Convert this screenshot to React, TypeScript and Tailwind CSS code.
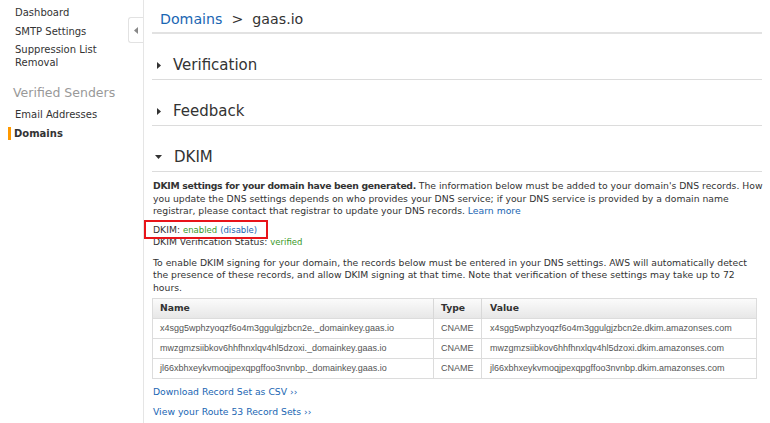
import React from 'react';

const records = [
  {
    name: 'x4sgg5wphzyoqzf6o4m3ggulgjzbcn2e._domainkey.gaas.io',
    type: 'CNAME',
    value: 'x4sgg5wphzyoqzf6o4m3ggulgjzbcn2e.dkim.amazonses.com',
  },
  {
    name: 'mwzgmzsiibkov6hhfhnxlqv4hl5dzoxi._domainkey.gaas.io',
    type: 'CNAME',
    value: 'mwzgmzsiibkov6hhfhnxlqv4hl5dzoxi.dkim.amazonses.com',
  },
  {
    name: 'jl66xbhxeykvmoqjpexqpgffoo3nvnbp._domainkey.gaas.io',
    type: 'CNAME',
    value: 'jl66xbhxeykvmoqjpexqpgffoo3nvnbp.dkim.amazonses.com',
  },
];

const verdana = { fontFamily: '"DejaVu Sans", Verdana, sans-serif' };
const arial = { fontFamily: '"Liberation Sans", Arial, sans-serif' };

function Caret({ open }: { open?: boolean }) {
  if (open) {
    return (
      <svg width="7" height="4" viewBox="0 0 7 4" className="ml-[3px] mr-[12px]">
        <path d="M0 0 L7 0 L3.5 4 Z" fill="#333" />
      </svg>
    );
  }
  return (
    <svg width="4" height="7" viewBox="0 0 4 7" className="ml-[5px] mr-[12px]">
      <path d="M0 0 L4 3.5 L0 7 Z" fill="#333" />
    </svg>
  );
}

function Section({ title, open }: { title: string; open?: boolean }) {
  return (
    <div className="flex items-center h-[46px] pt-[17px] border-b border-[#dcdcdc] text-[15px] text-[#333]">
      <Caret open={open} />
      <span>{title}</span>
    </div>
  );
}

export default function App() {
  return (
    <div className="flex w-[770px] h-[423px] bg-white overflow-hidden text-[#333]" style={verdana}>
      {/* sidebar */}
      <div className="w-[128px] shrink-0 pt-[3px] text-[10px]">
        <div className="pl-[15px] leading-[19px]">Dashboard</div>
        <div className="pl-[15px] leading-[19px]">SMTP Settings</div>
        <div className="pl-[15px] pt-[3px] leading-[12.5px]">
          Suppression List
          <br />
          Removal
        </div>
        <div className="pl-[13px] mt-[15px] text-[12.5px] text-[#999] leading-[18px]">Verified Senders</div>
        <div className="pl-[15px] mt-[3px] leading-[19px]">Email Addresses</div>
        <div className="flex items-center h-[19px]">
          <div className="ml-[8px] w-[3px] h-[13px] bg-[#f90]" />
          <span className="ml-[3px] font-bold">Domains</span>
        </div>
      </div>

      {/* collapse tab */}
      <div className="w-[15px] shrink-0 pt-[17px]">
        <div className="h-[26px] border border-r-0 border-[#e2e2e2] rounded-l-[3px] flex items-center justify-center">
          <svg width="4" height="7" viewBox="0 0 4 7">
            <path d="M4 0 L0 3.5 L4 7 Z" fill="#888" />
          </svg>
        </div>
      </div>

      {/* main */}
      <div className="flex-1 border-l border-[#e5e5e5] pl-[8px] pr-[8px]">
        <div className="h-[34px] pt-[9px] pl-[8px] border-b-2 border-[#e2e2e2] text-[14.2px] leading-[20px]">
          <span className="text-[#1a66b3]">Domains</span>
          <span className="mx-[9px] text-[#333]">&gt;</span>
          <span className="text-[#333]">gaas.io</span>
        </div>

        <Section title="Verification" />
        <Section title="Feedback" />
        <Section title="DKIM" open />

        <div className="text-[9.25px] leading-[12.5px] pl-[1px]">
          <p className="mt-[8px] mr-[-7px]">
            <b className="tracking-[-0.3px]">DKIM settings for your domain have been generated.</b> The information
            below must be added to your domain's DNS records. How you update the DNS settings depends on who provides
            your DNS service; if your DNS service is provided by a domain name registrar, please contact that
            registrar to update your DNS records. <span className="text-[#1a66b3]">Learn more</span>
          </p>

          <div className="relative mt-[6px] leading-[12px]">
            <div>
              DKIM: <span className="text-[8.5px] text-[#3a9a2a]">enabled</span>{' '}
              <span className="text-[8.5px] text-[#1a66b3]">(disable)</span>
            </div>
            <div className="absolute left-[-9px] top-[-4px] w-[124px] h-[19px] border-2 border-[#e8141a] pointer-events-none" />
          </div>
          <div className="leading-[11px]">
            DKIM Verification Status: <span className="text-[8.5px] text-[#3a9a2a]">verified</span>
          </div>

          <p className="mt-[9px]">
            To enable DKIM signing for your domain, the records below must be entered in your DNS settings. AWS will
            automatically detect the presence of these records, and allow DKIM signing at that time. Note that
            verification of these settings may take up to 72 hours.
          </p>
        </div>

        <table className="mt-[4px] w-[605px] table-fixed border-collapse border border-[#dcdcdc] text-[9.25px]">
          <colgroup>
            <col className="w-[281px]" />
            <col className="w-[48px]" />
            <col />
          </colgroup>
          <thead>
            <tr className="h-[20px] bg-gradient-to-b from-[#fbfbfb] to-[#e6e6e6]">
              <th className="text-left font-bold pl-[7px] pb-[2px] border-r border-[#d8d8d8]">Name</th>
              <th className="text-left font-bold pl-[7px] pb-[2px] border-r border-[#d8d8d8]">Type</th>
              <th className="text-left font-bold pl-[8px] pb-[2px]">Value</th>
            </tr>
          </thead>
          <tbody style={arial} className="text-[#555] text-[9px]">
            {records.map((r) => (
              <tr key={r.name} className="h-[20px] border-t border-[#dcdcdc]">
                <td className="pl-[7px] border-r border-[#dcdcdc] whitespace-nowrap">{r.name}</td>
                <td className="pl-[7px] border-r border-[#dcdcdc]">{r.type}</td>
                <td className="pl-[8px] whitespace-nowrap">{r.value}</td>
              </tr>
            ))}
          </tbody>
        </table>

        <div className="text-[9.25px] text-[#1a66b3] pl-[1px]">
          <div className="mt-[7px] leading-[12px]">Download Record Set as CSV &rsaquo;&rsaquo;</div>
          <div className="mt-[8px] leading-[12px]">View your Route 53 Record Sets &rsaquo;&rsaquo;</div>
        </div>
      </div>
    </div>
  );
}
